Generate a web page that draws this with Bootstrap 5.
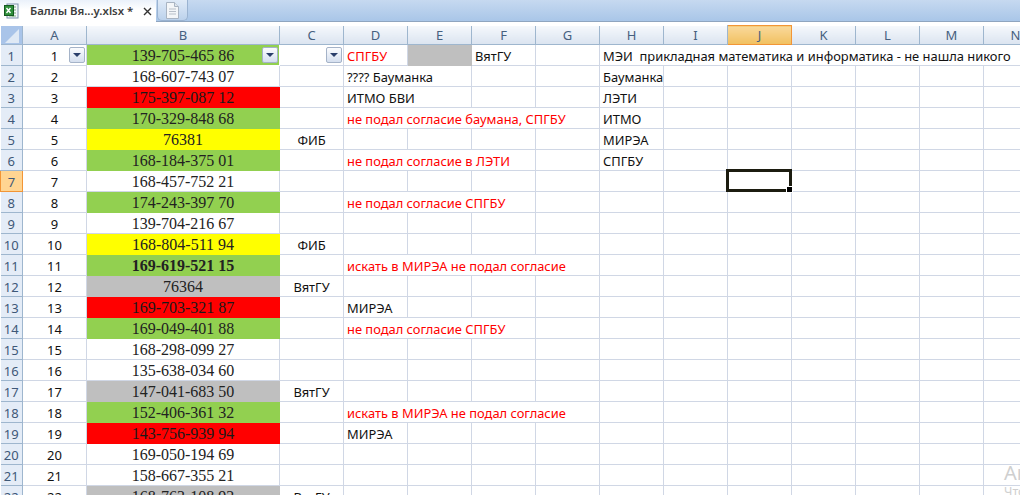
<!doctype html>
<html lang="ru"><head><meta charset="utf-8"><title>Баллы</title>
<link rel="stylesheet" href="https://cdn.jsdelivr.net/npm/bootstrap@5.3.0/dist/css/bootstrap.min.css">
<style>
html,body{margin:0;width:1020px;height:495px;overflow:hidden;background:#fff;font-family:"Noto Sans",sans-serif;}
.tabbar{height:21px;background:linear-gradient(#c6d9f0,#a9c6e8);border-bottom:1px solid #8fa5bf;box-sizing:content-box;}
.tab-doc{width:156px;height:22px;background:linear-gradient(#eaf1fa,#fff 45%);padding-left:4px;}
.tab-name{font-size:11.4px;font-weight:600;color:#3c3c3c;margin-left:10px;line-height:1;white-space:nowrap;}
.tab-new{width:31px;height:21px;margin-left:1px;background:linear-gradient(#dfeaf7,#bcd2ec);border:1px solid #9ab3d1;border-top:0;border-radius:0 0 5px 5px;}
.gap-line{height:3px;background:#fff;}
.sheet-wrap{height:470px;overflow:hidden;}
.table.sheet-grid{table-layout:fixed;width:1047px;margin:0;border-collapse:collapse;font-size:12.9px;color:#111;}
.table.sheet-grid th,.table.sheet-grid td{height:21px;padding:2px 0 0;border:0;border-right:1px solid #d0d7e5;border-bottom:1px solid #d0d7e5;line-height:18px;white-space:nowrap;overflow:visible;font-weight:400;vertical-align:middle;box-shadow:none;background:transparent;color:#111;}
.table.sheet-grid td.txt{padding-left:3px;}
.table.sheet-grid td.warn{color:#f00;}
.table.sheet-grid td.num{font-family:"Liberation Serif",serif;font-size:16px;text-align:center;color:#222;}
.table.sheet-grid td.strong{font-weight:700;}
.table.sheet-grid td.idx{text-align:center;color:#111;font-size:13px;}
.table.sheet-grid td.mid{text-align:center;}
.table.sheet-grid th.colh{height:19px;padding:0;line-height:18px;text-align:center;background:linear-gradient(#f5f8fc,#dbe4f0);color:#46607f;font-size:13px;border-right:1px solid #9eb6ce;border-bottom:1px solid #9eb6ce;}
.table.sheet-grid th.colh.picked{background:linear-gradient(#f9d99b,#f1c05f);border:1px solid #f29536;color:#46607f;}
.table.sheet-grid th.rowh{background:#e4ecf7;color:#3e5878;font-size:13px;text-align:center;border-right:1px solid #9eb6ce;border-bottom:1px solid #9eb6ce;}
.table.sheet-grid th.rowh.picked{background:#ffd592;border:1px solid #f29536;}
.table.sheet-grid th.corner{height:19px;padding:0;background:#a9c4e9;border-right:1px solid #9eb6ce;border-bottom:1px solid #9eb6ce;}
.corner-tri{display:block;width:0;height:0;border-left:14px solid transparent;border-bottom:14px solid #dfe9f5;margin:3px 0 0 4px;}
.table.sheet-grid td.fill-green{background:#92d050;}
.table.sheet-grid td.fill-red{background:#f00;color:#1a1a1a;}
.table.sheet-grid td.fill-yellow{background:#ff0;}
.table.sheet-grid td.fill-grey{background:#bfbfbf;}
.table.sheet-grid td.fill-green,.table.sheet-grid td.fill-red,.table.sheet-grid td.fill-yellow,.table.sheet-grid td.fill-grey{border-color:transparent;}
.has-pop{position:relative;}
.filter-btn{position:absolute;top:2px;right:1px;width:16px;height:16px;border:1px solid #a5b3c8;border-radius:2px;background:linear-gradient(#fbfcfe,#d5dfef);display:flex;align-items:center;justify-content:center;}
.filter-btn::after{content:"";border-left:4px solid transparent;border-right:4px solid transparent;border-top:4px solid #2b3f6b;}
.cell-cursor{position:absolute;left:-2px;top:-2px;width:66px;height:23px;border:3px solid #1c1c10;}
.cell-handle{position:absolute;right:-4px;bottom:-4px;width:5px;height:5px;background:#000;border:1px solid #fff;box-sizing:content-box;}
.activate{position:absolute;left:1004px;top:461px;color:#cfcfcf;font-size:20px;line-height:24px;white-space:nowrap;}
.activate-sub{font-size:12.5px;line-height:14px;}
</style></head><body>
<div class="tabbar d-flex align-items-start">
<div class="tab-doc d-flex align-items-center">
<svg width="16" height="16" viewBox="0 0 16 16"><rect x="3" y="1" width="11" height="14" fill="#f4f7fb" stroke="#7f93ad"/><path d="M5 4h7M5 7h7M5 10h7M5 13h7M9 2v12" stroke="#7fb27f" stroke-width="1"/><rect x="0.5" y="2.5" width="9" height="10" fill="#2f8f3a" stroke="#14591f"/><path d="M2.500 5l4 5M6.500 5l-4 5" stroke="#fff" stroke-width="1.4"/></svg>
<span class="tab-name">Баллы Вя...у.xlsx *</span>
<svg class="ms-auto me-1" width="9" height="9" viewBox="0 0 9 9"><path d="M1 1l7 7M8 1l-7 7" stroke="#333" stroke-width="1.4"/></svg>
</div>
<div class="tab-new d-flex align-items-center justify-content-center">
<svg width="13" height="17" viewBox="0 0 13 17"><path d="M.5.500h8l4 4v12H.5z" fill="#f4f6f8" stroke="#a9b4c2"/><path d="M8.500.5v4h4" fill="#dfe5ec" stroke="#a9b4c2"/><path d="M3 7h7M3 9.500h7M3 12h7" stroke="#b8bfc8"/></svg>
</div>
</div>
<div class="gap-line"></div>
<div class="sheet-wrap">
<table class="table sheet-grid">
<colgroup><col style="width:22px"><col style="width:64px"><col style="width:193px"><col style="width:64px"><col style="width:64px"><col style="width:64px"><col style="width:64px"><col style="width:64px"><col style="width:64px"><col style="width:64px"><col style="width:64px"><col style="width:64px"><col style="width:64px"><col style="width:64px"><col style="width:64px"></colgroup>
<thead><tr><th class="corner"><span class="corner-tri"></span></th><th class="colh">A</th><th class="colh">B</th><th class="colh">C</th><th class="colh">D</th><th class="colh">E</th><th class="colh">F</th><th class="colh">G</th><th class="colh">H</th><th class="colh">I</th><th class="colh picked">J</th><th class="colh">K</th><th class="colh">L</th><th class="colh">M</th><th class="colh">N</th></tr></thead>
<tbody>
<tr><th class="rowh">1</th><td class="idx has-pop">1<span class="filter-btn"></span></td><td class="num fill-green has-pop">139-705-465 86<span class="filter-btn"></span></td><td class="has-pop"><span class="filter-btn"></span></td><td class="txt warn">СПГБУ</td><td class="fill-grey"></td><td class="txt">ВятГУ</td><td></td><td class="txt" colspan="7">МЭИ&nbsp; прикладная математика и информатика - не нашла никого</td></tr>
<tr><th class="rowh">2</th><td class="idx">2</td><td class="num">168-607-743 07</td><td></td><td class="txt" colspan="2">???? Бауманка</td><td></td><td></td><td class="txt">Бауманка</td><td></td><td></td><td></td><td></td><td></td><td></td></tr>
<tr><th class="rowh">3</th><td class="idx">3</td><td class="num fill-red">175-397-087 12</td><td></td><td class="txt" colspan="2">ИТМО БВИ</td><td></td><td></td><td class="txt">ЛЭТИ</td><td></td><td></td><td></td><td></td><td></td><td></td></tr>
<tr><th class="rowh">4</th><td class="idx">4</td><td class="num fill-green">170-329-848 68</td><td></td><td class="txt warn" colspan="4">не подал согласие баумана, СПГБУ</td><td class="txt">ИТМО</td><td></td><td></td><td></td><td></td><td></td><td></td></tr>
<tr><th class="rowh">5</th><td class="idx">5</td><td class="num fill-yellow">76381</td><td class="mid">ФИБ</td><td></td><td></td><td></td><td></td><td class="txt">МИРЭА</td><td></td><td></td><td></td><td></td><td></td><td></td></tr>
<tr><th class="rowh">6</th><td class="idx">6</td><td class="num fill-green">168-184-375 01</td><td></td><td class="txt warn" colspan="3">не подал согласие в ЛЭТИ</td><td></td><td class="txt">СПГБУ</td><td></td><td></td><td></td><td></td><td></td><td></td></tr>
<tr><th class="rowh picked">7</th><td class="idx">7</td><td class="num">168-457-752 21</td><td></td><td></td><td></td><td></td><td></td><td></td><td></td><td class="has-pop"><span class="cell-cursor"><span class="cell-handle"></span></span></td><td></td><td></td><td></td><td></td></tr>
<tr><th class="rowh">8</th><td class="idx">8</td><td class="num fill-green">174-243-397 70</td><td></td><td class="txt warn" colspan="3">не подал согласие СПГБУ</td><td></td><td></td><td></td><td></td><td></td><td></td><td></td><td></td></tr>
<tr><th class="rowh">9</th><td class="idx">9</td><td class="num">139-704-216 67</td><td></td><td></td><td></td><td></td><td></td><td></td><td></td><td></td><td></td><td></td><td></td><td></td></tr>
<tr><th class="rowh">10</th><td class="idx">10</td><td class="num fill-yellow">168-804-511 94</td><td class="mid">ФИБ</td><td></td><td></td><td></td><td></td><td></td><td></td><td></td><td></td><td></td><td></td><td></td></tr>
<tr><th class="rowh">11</th><td class="idx">11</td><td class="num strong fill-green">169-619-521 15</td><td></td><td class="txt warn" colspan="4">искать в МИРЭА не подал согласие</td><td></td><td></td><td></td><td></td><td></td><td></td><td></td></tr>
<tr><th class="rowh">12</th><td class="idx">12</td><td class="num fill-grey">76364</td><td class="mid">ВятГУ</td><td></td><td></td><td></td><td></td><td></td><td></td><td></td><td></td><td></td><td></td><td></td></tr>
<tr><th class="rowh">13</th><td class="idx">13</td><td class="num fill-red">169-703-321 87</td><td></td><td class="txt">МИРЭА</td><td></td><td></td><td></td><td></td><td></td><td></td><td></td><td></td><td></td><td></td></tr>
<tr><th class="rowh">14</th><td class="idx">14</td><td class="num fill-green">169-049-401 88</td><td></td><td class="txt warn" colspan="3">не подал согласие СПГБУ</td><td></td><td></td><td></td><td></td><td></td><td></td><td></td><td></td></tr>
<tr><th class="rowh">15</th><td class="idx">15</td><td class="num">168-298-099 27</td><td></td><td></td><td></td><td></td><td></td><td></td><td></td><td></td><td></td><td></td><td></td><td></td></tr>
<tr><th class="rowh">16</th><td class="idx">16</td><td class="num">135-638-034 60</td><td></td><td></td><td></td><td></td><td></td><td></td><td></td><td></td><td></td><td></td><td></td><td></td></tr>
<tr><th class="rowh">17</th><td class="idx">17</td><td class="num fill-grey">147-041-683 50</td><td class="mid">ВятГУ</td><td></td><td></td><td></td><td></td><td></td><td></td><td></td><td></td><td></td><td></td><td></td></tr>
<tr><th class="rowh">18</th><td class="idx">18</td><td class="num fill-green">152-406-361 32</td><td></td><td class="txt warn" colspan="4">искать в МИРЭА не подал согласие</td><td></td><td></td><td></td><td></td><td></td><td></td><td></td></tr>
<tr><th class="rowh">19</th><td class="idx">19</td><td class="num fill-red">143-756-939 94</td><td></td><td class="txt">МИРЭА</td><td></td><td></td><td></td><td></td><td></td><td></td><td></td><td></td><td></td><td></td></tr>
<tr><th class="rowh">20</th><td class="idx">20</td><td class="num">169-050-194 69</td><td></td><td></td><td></td><td></td><td></td><td></td><td></td><td></td><td></td><td></td><td></td><td></td></tr>
<tr><th class="rowh">21</th><td class="idx">21</td><td class="num">158-667-355 21</td><td></td><td></td><td></td><td></td><td></td><td></td><td></td><td></td><td></td><td></td><td></td><td></td></tr>
<tr><th class="rowh">22</th><td class="idx">22</td><td class="num fill-grey">168-763-108 92</td><td class="mid">ВятГУ</td><td></td><td></td><td></td><td></td><td></td><td></td><td></td><td></td><td></td><td></td><td></td></tr>
</tbody></table>
</div>
<div class="activate">Активация Windows<div class="activate-sub">Чтобы активировать Windows</div></div>
<script src="https://cdn.jsdelivr.net/npm/bootstrap@5.3.0/dist/js/bootstrap.bundle.min.js"></script>
</body></html>
